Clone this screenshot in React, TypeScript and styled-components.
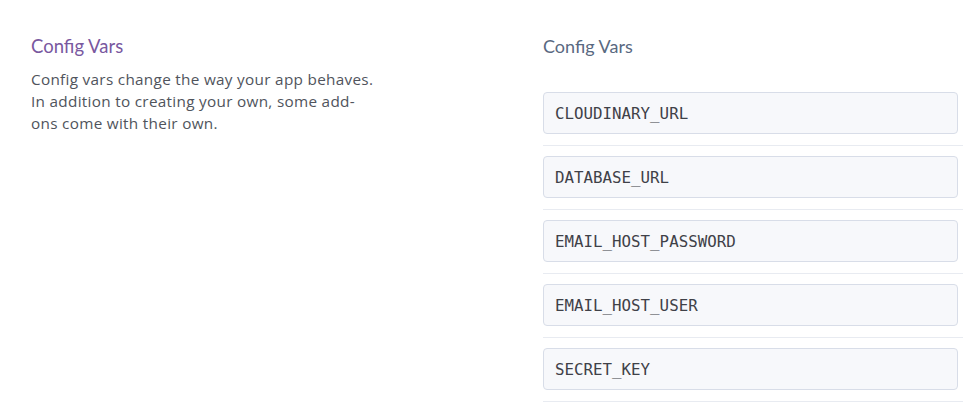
import React from "react";
import styled, { createGlobalStyle } from "styled-components";

const Global = createGlobalStyle`
  html, body { margin: 0; padding: 0; background: #ffffff; }
  body { font-family: Lato, "Open Sans", "Liberation Sans", sans-serif; }
`;

const Page = styled.div`
  display: grid;
  grid-template-columns: 512px 1fr;
  padding: 35px 0 0 31px;
  width: 963px;
  box-sizing: border-box;
  height: 402px;
  overflow: hidden;
`;

const Intro = styled.section`
  display: flex;
  flex-direction: column;
`;

const Title = styled.h2`
  margin: 0;
  font-size: 18.5px;
  font-weight: 400;
  line-height: 22px;
  color: #79589f;
`;

const Description = styled.p`
  margin: 11px 0 0;
  width: 350px;
  font-family: "Open Sans", Lato, sans-serif;
  font-size: 15.3px;
  letter-spacing: 0.3px;
  line-height: 22px;
  color: #50545c;
`;

const VarsPanel = styled.section`
  display: flex;
  flex-direction: column;
`;

const PanelTitle = styled.h3`
  margin: 0;
  font-size: 18px;
  font-weight: 400;
  line-height: 22px;
  color: #596981;
`;

const VarList = styled.div`
  display: flex;
  flex-direction: column;
  margin-top: 35px;
`;

const VarRow = styled.div`
  padding: 0 0 10.5px;
  border-bottom: 1px solid #e8ebf1;
  margin-bottom: 10.5px;
`;

const KeyField = styled.div`
  box-sizing: border-box;
  width: 415px;
  height: 42px;
  display: flex;
  align-items: center;
  padding: 0 11px;
  background: #f7f8fb;
  border: 1px solid #d8dde8;
  border-radius: 4px;
  font-family: "DejaVu Sans Mono", "Liberation Mono", monospace;
  font-size: 15.8px;
  color: #3f4148;
`;

const keys = [
  "CLOUDINARY_URL",
  "DATABASE_URL",
  "EMAIL_HOST_PASSWORD",
  "EMAIL_HOST_USER",
  "SECRET_KEY",
];

export default function App() {
  return (
    <>
      <Global />
      <Page>
        <Intro>
          <Title>Config Vars</Title>
          <Description>
            Config vars change the way your app behaves. In addition to creating your own, some add-ons come with their own.
          </Description>
        </Intro>
        <VarsPanel>
          <PanelTitle>Config Vars</PanelTitle>
          <VarList>
            {keys.map((k) => (
              <VarRow key={k}>
                <KeyField>{k}</KeyField>
              </VarRow>
            ))}
          </VarList>
        </VarsPanel>
      </Page>
    </>
  );
}
